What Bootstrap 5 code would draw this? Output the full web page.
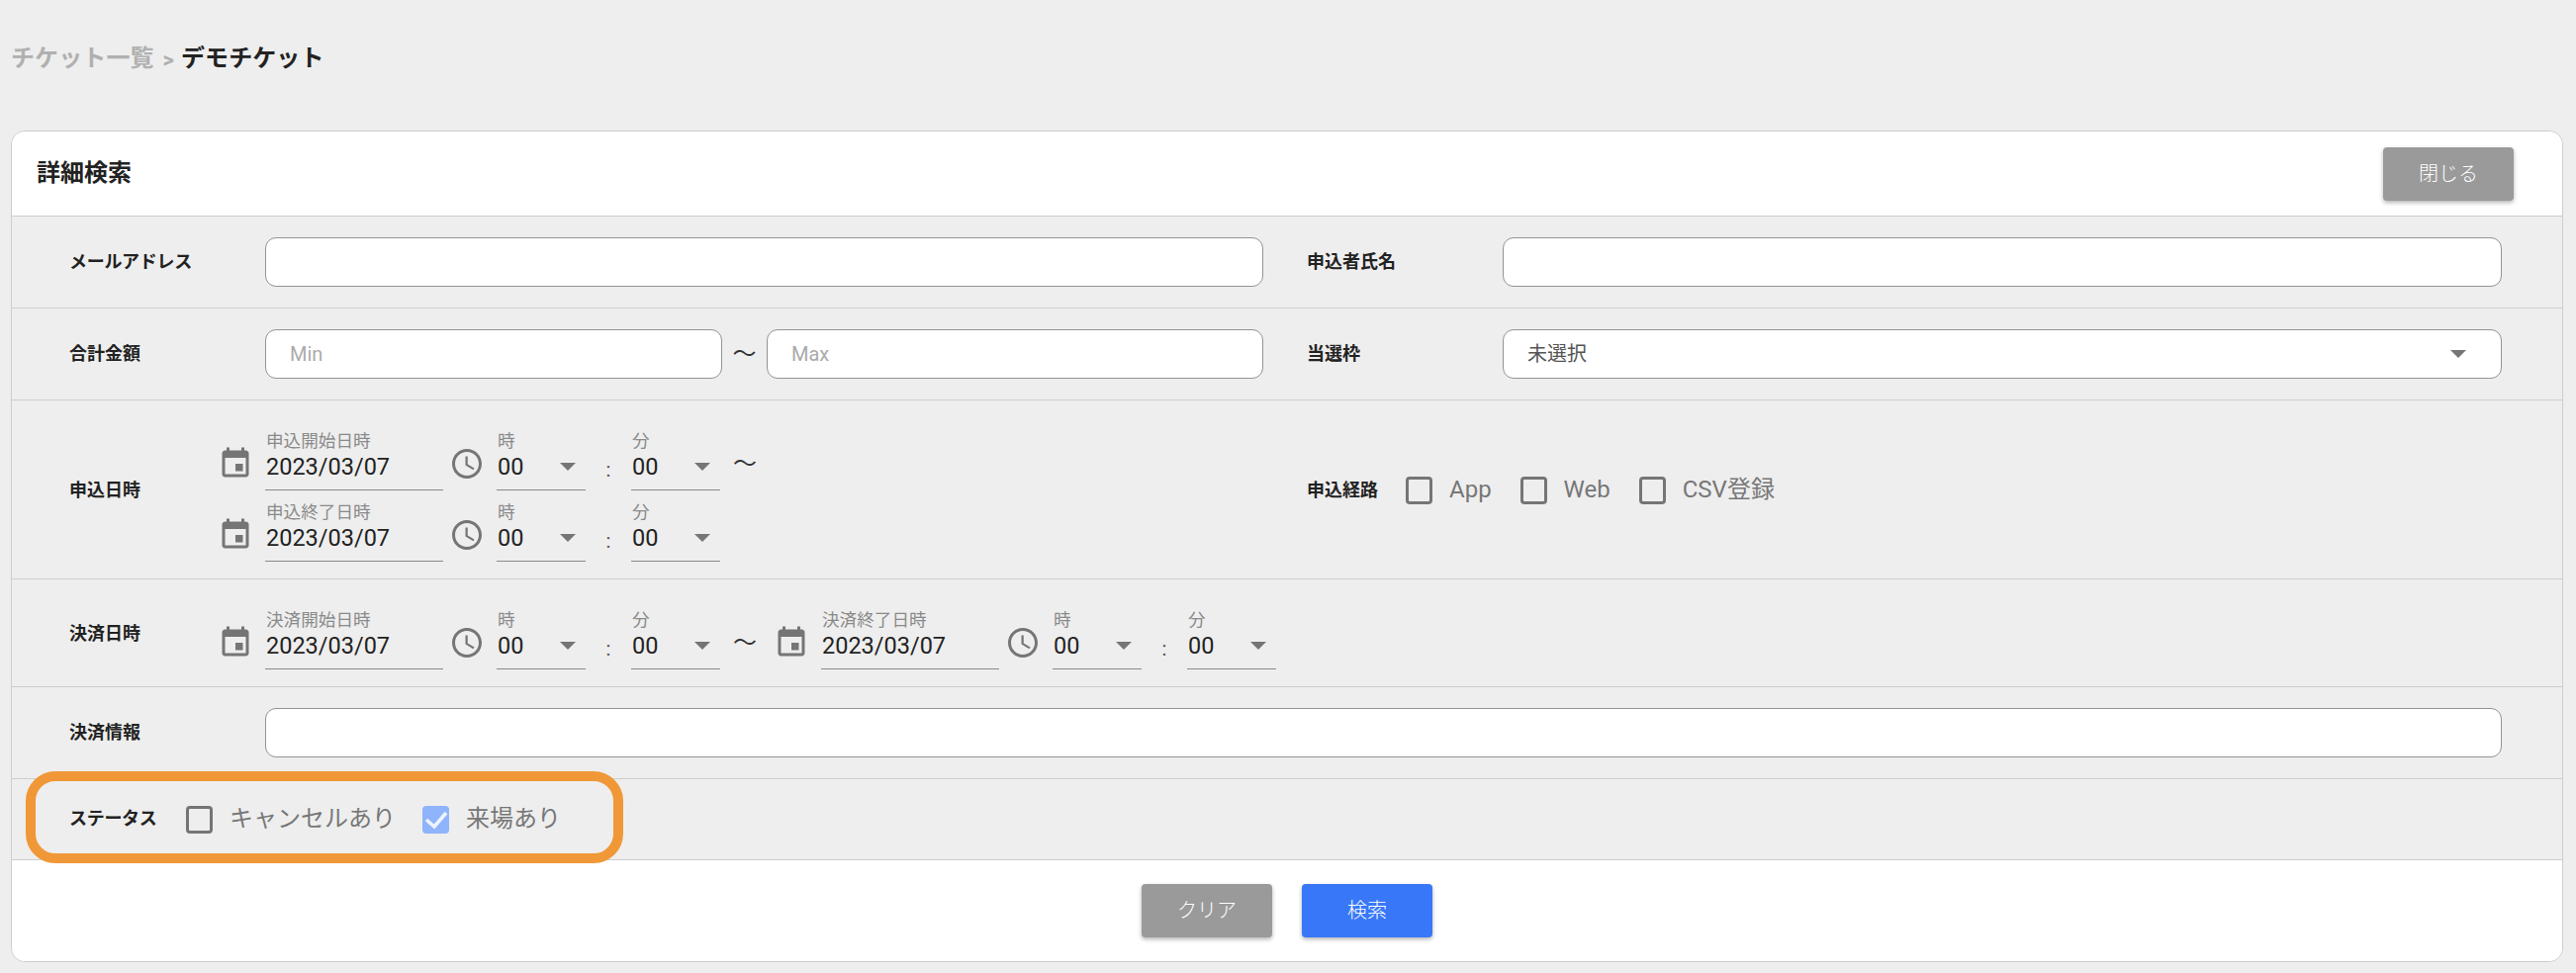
<!DOCTYPE html>
<html lang="ja">
<head>
<meta charset="utf-8">
<title>詳細検索</title>
<link href="https://cdn.jsdelivr.net/npm/bootstrap@5.3.0/dist/css/bootstrap.min.css" rel="stylesheet">
<style>
html,body{background:#eee;margin:0}
body{font-family:Roboto,"Noto Sans CJK JP",sans-serif;color:#222}
.pg{padding:0 13px 0 11px}
.crumbs{height:132px;padding-bottom:14px;font-size:24px;font-weight:700}
.crumbs .c1{color:#b0b0b0;letter-spacing:.1px}
.crumbs .c2{color:#b0b0b0;font-size:22px;margin:2px 7px 0 9px}
.crumbs .c3{color:#222;letter-spacing:.1px}
.sc-card{border:1px solid #cdcdcd;border-radius:14px;background:#fff;overflow:visible}
.sc-head{background:#fff;height:86px;padding:0 49px 0 25px;border-bottom:1px solid #cdcdcd;border-radius:14px 14px 0 0!important}
.sc-title{font-size:24px;font-weight:700;color:#222;margin:0}
.sc-btn{width:132px;height:54px;padding:0;font-size:20px;font-weight:300;color:#fff;border:0;border-radius:4px;box-shadow:0 2px 4px rgba(0,0,0,.3)}
.sc-btn:hover,.sc-btn:active{color:#fff}
.sc-grey,.sc-grey:hover{background:#9a9a9a}
.sc-blue,.sc-blue:hover{background:#3878f8}
.s-row{background:#eee;border-bottom:1px solid #cdcdcd;padding-top:21px;padding-bottom:21px}
.s-row.dt{padding-top:19px;padding-bottom:17px}
.s-row.st{padding-top:0;padding-bottom:0;height:82px;position:relative}
.s-left{padding-left:58px;padding-right:24px}
.s-right{padding-left:20px;padding-right:61px}
.s-label{font-size:18px;font-weight:700;color:#222;flex:none;padding-bottom:2px}
.s-kana{letter-spacing:-.3px}
.w198{width:198px}.w150{width:150px}.w100{width:100px}.w118{width:118px}
.s-left.s-wide{padding-right:61px}
.s-input.form-control{height:50px;border:1px solid #939393;border-radius:11px;font-size:20px;padding:0 24px;color:#555;background:#fff}
.s-input.form-control::placeholder{color:#aaa}
.s-input.s-min{flex:none;width:462px}
.s-input.form-control.s-fill{display:flex;align-items:center;justify-content:space-between;padding-right:35px}
.s-tri{display:block;width:0;height:0;border-left:8px solid transparent;border-right:8px solid transparent;border-top:8px solid #757575}
.s-tilde{flex:none;width:45px;text-align:center;font-size:24px;color:#333;line-height:1}
.dt-line{height:72px}
.dt-ic{flex:none;width:36px;height:36px;margin-top:27px;fill:#757575}
.dt-ic.cal{margin-right:12px}
.dt-ic.clk{margin-left:6px;margin-right:12px}
.dt-field{flex:none;height:72px;padding-top:12px;border-bottom:1px solid #8a8a8a}
.dt-field.d{width:180px}
.dt-field.t{width:90px}
.dt-cap{font-size:17.6px;line-height:20px;color:#8a8a8a;padding-left:1px}
.dt-val{font-size:23.5px;line-height:30px;margin-top:1px;color:#222;padding-left:1px;display:flex;align-items:center;justify-content:space-between;padding-right:10px}
.dt-colon{flex:none;width:46px;text-align:center;padding-top:36px;font-size:20px;color:#555}
.dt-gap{flex:none;width:54px;padding:33px 0 0 13px;font-size:24px;line-height:1;color:#333}
.cb-wrap{font-size:24px;color:#777}
.cb-txt{margin-left:17px;margin-right:29px;padding-bottom:2px}
.st .cb-txt{margin-right:27px}
.cb-txt:last-child{margin-right:0}
.form-check-input.s-cb{width:27px;height:28px;margin:0;flex:none;background-color:transparent;border:3px solid #757575;border-radius:4px;box-shadow:none}
.form-check-input.s-cb:checked{background-color:#8fb4fb;border:0;background-size:100% 100%;background-image:url("data:image/svg+xml,%3Csvg xmlns='http://www.w3.org/2000/svg' viewBox='0 0 27 28'%3E%3Cpath d='M4 14l8 7L24 7' fill='none' stroke='%23eef3ff' stroke-width='3.6'/%3E%3C/svg%3E")}
.s-ring{position:absolute;left:14px;top:-8px;width:604px;height:93px;border:10px solid #f09837;border-radius:30px;pointer-events:none}
.sc-foot{background:#fff;border:0;height:102px;padding:24px 0 0;border-radius:0 0 14px 14px!important}
.g30{gap:30px}
</style>
</head>
<body>
<div class="pg">
  <div class="crumbs d-flex align-items-center">
    <span class="c1">チケット一覧</span><span class="c2">&gt;</span><span class="c3">デモチケット</span>
  </div>

  <div class="card sc-card">
    <div class="card-header sc-head d-flex align-items-center justify-content-between">
      <h2 class="sc-title">詳細検索</h2>
      <button type="button" class="btn sc-btn sc-grey">閉じる</button>
    </div>

    <div class="row g-0 s-row align-items-center">
      <div class="col-6 s-left d-flex align-items-center">
        <div class="s-label s-kana w198">メールアドレス</div>
        <input class="form-control s-input" type="text">
      </div>
      <div class="col-6 s-right d-flex align-items-center">
        <div class="s-label w198">申込者氏名</div>
        <input class="form-control s-input" type="text">
      </div>
    </div>

    <div class="row g-0 s-row align-items-center">
      <div class="col-6 s-left d-flex align-items-center">
        <div class="s-label w198">合計金額</div>
        <input class="form-control s-input s-min" type="text" placeholder="Min">
        <span class="s-tilde">〜</span>
        <input class="form-control s-input" type="text" placeholder="Max">
      </div>
      <div class="col-6 s-right d-flex align-items-center">
        <div class="s-label w198">当選枠</div>
        <div class="form-control s-input s-fill"><span>未選択</span><i class="s-tri"></i></div>
      </div>
    </div>

    <div class="row g-0 s-row dt align-items-center">
      <div class="col-6 s-left d-flex align-items-center">
        <div class="s-label w150">申込日時</div>
        <div>
          <div class="dt-line d-flex">
            <svg class="dt-ic cal" viewBox="0 0 24 24"><path d="M17 12h-5v5h5v-5zM16 1v2H8V1H6v2H5c-1.11 0-1.99.9-1.99 2L3 19c0 1.1.89 2 2 2h14c1.1 0 2-.9 2-2V5c0-1.1-.9-2-2-2h-1V1h-2zm3 18H5V8h14v11z"/></svg>
            <div class="dt-field d"><div class="dt-cap">申込開始日時</div><div class="dt-val">2023/03/07</div></div>
            <svg class="dt-ic clk" viewBox="0 0 24 24"><path d="M11.99 2C6.47 2 2 6.48 2 12s4.47 10 9.99 10C17.52 22 22 17.52 22 12S17.52 2 11.99 2zM12 20c-4.42 0-8-3.58-8-8s3.58-8 8-8 8 3.58 8 8-3.58 8-8 8zm.5-13H11v6l5.25 3.15.75-1.23-4.5-2.67z"/></svg>
            <div class="dt-field t"><div class="dt-cap">時</div><div class="dt-val"><span>00</span><i class="s-tri"></i></div></div>
            <div class="dt-colon">:</div>
            <div class="dt-field t"><div class="dt-cap">分</div><div class="dt-val"><span>00</span><i class="s-tri"></i></div></div>
            <div class="dt-gap">〜</div>
          </div>
          <div class="dt-line d-flex">
            <svg class="dt-ic cal" viewBox="0 0 24 24"><path d="M17 12h-5v5h5v-5zM16 1v2H8V1H6v2H5c-1.11 0-1.99.9-1.99 2L3 19c0 1.1.89 2 2 2h14c1.1 0 2-.9 2-2V5c0-1.1-.9-2-2-2h-1V1h-2zm3 18H5V8h14v11z"/></svg>
            <div class="dt-field d"><div class="dt-cap">申込終了日時</div><div class="dt-val">2023/03/07</div></div>
            <svg class="dt-ic clk" viewBox="0 0 24 24"><path d="M11.99 2C6.47 2 2 6.48 2 12s4.47 10 9.99 10C17.52 22 22 17.52 22 12S17.52 2 11.99 2zM12 20c-4.42 0-8-3.58-8-8s3.58-8 8-8 8 3.58 8 8-3.58 8-8 8zm.5-13H11v6l5.25 3.15.75-1.23-4.5-2.67z"/></svg>
            <div class="dt-field t"><div class="dt-cap">時</div><div class="dt-val"><span>00</span><i class="s-tri"></i></div></div>
            <div class="dt-colon">:</div>
            <div class="dt-field t"><div class="dt-cap">分</div><div class="dt-val"><span>00</span><i class="s-tri"></i></div></div>
          </div>
        </div>
      </div>
      <div class="col-6 s-right d-flex align-items-center">
        <div class="s-label w100">申込経路</div>
        <div class="cb-wrap d-flex align-items-center">
          <input class="form-check-input s-cb" type="checkbox"><span class="cb-txt">App</span>
          <input class="form-check-input s-cb" type="checkbox"><span class="cb-txt">Web</span>
          <input class="form-check-input s-cb" type="checkbox"><span class="cb-txt">CSV登録</span>
        </div>
      </div>
    </div>

    <div class="s-row dt d-flex align-items-center s-left">
      <div class="s-label w150">決済日時</div>
      <div class="dt-line d-flex">
        <svg class="dt-ic cal" viewBox="0 0 24 24"><path d="M17 12h-5v5h5v-5zM16 1v2H8V1H6v2H5c-1.11 0-1.99.9-1.99 2L3 19c0 1.1.89 2 2 2h14c1.1 0 2-.9 2-2V5c0-1.1-.9-2-2-2h-1V1h-2zm3 18H5V8h14v11z"/></svg>
        <div class="dt-field d"><div class="dt-cap">決済開始日時</div><div class="dt-val">2023/03/07</div></div>
        <svg class="dt-ic clk" viewBox="0 0 24 24"><path d="M11.99 2C6.47 2 2 6.48 2 12s4.47 10 9.99 10C17.52 22 22 17.52 22 12S17.52 2 11.99 2zM12 20c-4.42 0-8-3.58-8-8s3.58-8 8-8 8 3.58 8 8-3.58 8-8 8zm.5-13H11v6l5.25 3.15.75-1.23-4.5-2.67z"/></svg>
        <div class="dt-field t"><div class="dt-cap">時</div><div class="dt-val"><span>00</span><i class="s-tri"></i></div></div>
        <div class="dt-colon">:</div>
        <div class="dt-field t"><div class="dt-cap">分</div><div class="dt-val"><span>00</span><i class="s-tri"></i></div></div>
        <div class="dt-gap">〜</div>
        <svg class="dt-ic cal" viewBox="0 0 24 24"><path d="M17 12h-5v5h5v-5zM16 1v2H8V1H6v2H5c-1.11 0-1.99.9-1.99 2L3 19c0 1.1.89 2 2 2h14c1.1 0 2-.9 2-2V5c0-1.1-.9-2-2-2h-1V1h-2zm3 18H5V8h14v11z"/></svg>
        <div class="dt-field d"><div class="dt-cap">決済終了日時</div><div class="dt-val">2023/03/07</div></div>
        <svg class="dt-ic clk" viewBox="0 0 24 24"><path d="M11.99 2C6.47 2 2 6.48 2 12s4.47 10 9.99 10C17.52 22 22 17.52 22 12S17.52 2 11.99 2zM12 20c-4.42 0-8-3.58-8-8s3.58-8 8-8 8 3.58 8 8-3.58 8-8 8zm.5-13H11v6l5.25 3.15.75-1.23-4.5-2.67z"/></svg>
        <div class="dt-field t"><div class="dt-cap">時</div><div class="dt-val"><span>00</span><i class="s-tri"></i></div></div>
        <div class="dt-colon">:</div>
        <div class="dt-field t"><div class="dt-cap">分</div><div class="dt-val"><span>00</span><i class="s-tri"></i></div></div>
      </div>
    </div>

    <div class="s-row s-left s-wide d-flex align-items-center">
      <div class="s-label w198">決済情報</div>
      <input class="form-control s-input" type="text">
    </div>

    <div class="s-row st s-left d-flex align-items-center">
      <div class="s-label s-kana w118">ステータス</div>
      <div class="cb-wrap d-flex align-items-center">
        <input class="form-check-input s-cb" type="checkbox"><span class="cb-txt">キャンセルあり</span>
        <input class="form-check-input s-cb" type="checkbox" checked><span class="cb-txt">来場あり</span>
      </div>
      <div class="s-ring"></div>
    </div>

    <div class="card-footer sc-foot d-flex justify-content-center align-items-start g30">
      <button type="button" class="btn sc-btn sc-grey">クリア</button>
      <button type="button" class="btn sc-btn sc-blue">検索</button>
    </div>
  </div>
</div>
<script src="https://cdn.jsdelivr.net/npm/bootstrap@5.3.0/dist/js/bootstrap.bundle.min.js"></script>
</body>
</html>
